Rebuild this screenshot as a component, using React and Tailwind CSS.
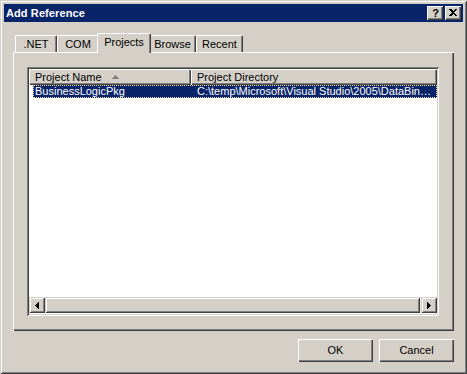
import React from "react";

const winFrame =
  "shadow-[inset_1px_1px_0_#d4d0c8,inset_-1px_-1px_0_#404040,inset_2px_2px_0_#ffffff,inset_-2px_-2px_0_#808080]";
const btnRaised =
  "shadow-[inset_1px_1px_0_#ffffff,inset_-1px_-1px_0_#404040,inset_-2px_-2px_0_#808080]";
const sbRaised =
  "shadow-[inset_1px_1px_0_#d4d0c8,inset_-1px_-1px_0_#404040,inset_2px_2px_0_#ffffff,inset_-2px_-2px_0_#808080]";
const sunken =
  "shadow-[inset_1px_1px_0_#808080,inset_-1px_-1px_0_#ffffff,inset_2px_2px_0_#404040,inset_-2px_-2px_0_#d4d0c8]";
const panelEdge =
  "shadow-[inset_1px_1px_0_#ffffff,inset_-1px_-1px_0_#404040,inset_-2px_-2px_0_#808080]";
const headerCell =
  "shadow-[inset_1px_1px_0_#ffffff,inset_-1px_-1px_0_#404040,inset_-2px_-2px_0_#808080]";

function Tab({ label, width, selected }) {
  if (selected) {
    return (
      <div
        className={`relative z-10 -mx-[2px] -mb-[1px] h-[20px] ${width} bg-[#d4d0c8] border-t border-l border-white border-r border-r-[#404040] rounded-tl-[2px] rounded-tr-[2px] shadow-[inset_-1px_0_0_#808080] flex items-start justify-center pt-[2px]`}
      >
        <span className="leading-[13px]">{label}</span>
      </div>
    );
  }
  return (
    <div
      className={`h-[17px] ${width} bg-[#d4d0c8] border-t border-l border-white border-r border-r-[#404040] rounded-tl-[2px] rounded-tr-[2px] shadow-[inset_-1px_0_0_#808080] flex items-start justify-center pt-[2px]`}
    >
      <span className="leading-[13px]">{label}</span>
    </div>
  );
}

function LeftArrow() {
  return (
    <svg width="4" height="7" viewBox="0 0 4 7" className="block">
      <path d="M0 3.5 L4 0 L4 7 Z" fill="#000" shapeRendering="crispEdges" />
    </svg>
  );
}
function RightArrow() {
  return (
    <svg width="4" height="7" viewBox="0 0 4 7" className="block">
      <path d="M4 3.5 L0 0 L0 7 Z" fill="#000" shapeRendering="crispEdges" />
    </svg>
  );
}

export default function App() {
  return (
    <div
      className={`w-[467px] h-[374px] bg-[#d4d0c8] p-1 flex flex-col ${winFrame} font-['Liberation_Sans',Arial,sans-serif] text-[11px] text-black select-none`}
    >
      {/* Title bar */}
      <div className="h-[18px] bg-[#0a246a] flex items-center pl-[2px] pr-[2px]">
        <span className="flex-1 font-bold text-white text-[11px] leading-none tracking-[0.1px]">
          Add Reference
        </span>
        <div
          className={`w-[16px] h-[14px] bg-[#d4d0c8] ${btnRaised} flex items-center justify-center`}
        >
          <span className="font-bold text-[11px] leading-none pl-[1px]">?</span>
        </div>
        <div
          className={`ml-[2px] w-[16px] h-[14px] bg-[#d4d0c8] ${btnRaised} flex items-center justify-center`}
        >
          <svg width="8" height="7" viewBox="0 0 8 7" className="block -mt-[1px]">
            <path
              d="M0 0h2l2 2 2-2h2L5 3.5 8 7H6L4 5 2 7H0l3-3.5z"
              fill="#000"
              shapeRendering="crispEdges"
            />
          </svg>
        </div>
      </div>

      {/* Body */}
      <div className="flex-1 flex flex-col pt-[11px] px-[9px]">
        {/* Tabs */}
        <div className="h-[19px] flex items-end pl-[2px]">
          <Tab label=".NET" width="w-[42px]" />
          <Tab label="COM" width="w-[42px]" />
          <Tab label="Projects" width="w-[54px]" selected />
          <Tab label="Browse" width="w-[47px]" />
          <Tab label="Recent" width="w-[47px]" />
        </div>

        {/* Tab panel */}
        <div className={`h-[279px] ${panelEdge} pl-[14px] pt-[15px] pr-[15px] pb-[15px]`}>
          {/* List view */}
          <div className={`w-[412px] h-[249px] bg-white p-[2px] ${sunken}`}>
            <div className="w-full h-full flex flex-col bg-white">
              {/* Header */}
              <div className="h-[16px] flex">
                <div
                  className={`w-[162px] h-full bg-[#d4d0c8] ${headerCell} flex items-center pl-[6px]`}
                >
                  <span className="leading-none">Project Name</span>
                  <svg width="7" height="4" viewBox="0 0 7 4" className="block ml-[10px] mt-[-1px]">
                    <path d="M3.5 0 L7 4 L0 4 Z" fill="#808080" shapeRendering="crispEdges" />
                  </svg>
                </div>
                <div
                  className={`flex-1 h-full bg-[#d4d0c8] ${headerCell} flex items-center pl-[6px]`}
                >
                  <span className="leading-none">Project Directory</span>
                </div>
              </div>

              {/* Selected row */}
              <div className="h-[13px] ml-[4px] bg-[#0a246a] text-white border border-dotted border-[#f5db95] flex items-center">
                <div className="w-[157px] pl-[1px] leading-none whitespace-nowrap">
                  BusinessLogicPkg
                </div>
                <div className="flex-1 pl-[6px] pr-[8px] leading-none whitespace-nowrap overflow-hidden">
                  {"C:\\temp\\Microsoft\\Visual Studio\\2005\\DataBin\u2026"}
                </div>
              </div>

              <div className="flex-1" />

              {/* Horizontal scrollbar */}
              <div className="h-[16px] flex mb-[1px]">
                <div
                  className={`w-[16px] h-full bg-[#d4d0c8] ${sbRaised} flex items-center justify-center`}
                >
                  <LeftArrow />
                </div>
                <div className={`w-[375px] h-full bg-[#d4d0c8] ${sbRaised}`} />
                <div className="flex-1 h-full bg-[#ebe9e4]" />
                <div
                  className={`w-[16px] h-full bg-[#d4d0c8] ${sbRaised} flex items-center justify-center`}
                >
                  <RightArrow />
                </div>
              </div>
            </div>
          </div>
        </div>

        {/* Buttons */}
        <div className="mt-[8px] flex justify-end gap-[6px]">
          <div
            className={`w-[75px] h-[23px] bg-[#d4d0c8] ${btnRaised} flex items-center justify-center`}
          >
            OK
          </div>
          <div
            className={`w-[75px] h-[23px] bg-[#d4d0c8] ${btnRaised} flex items-center justify-center`}
          >
            Cancel
          </div>
        </div>
      </div>
    </div>
  );
}
